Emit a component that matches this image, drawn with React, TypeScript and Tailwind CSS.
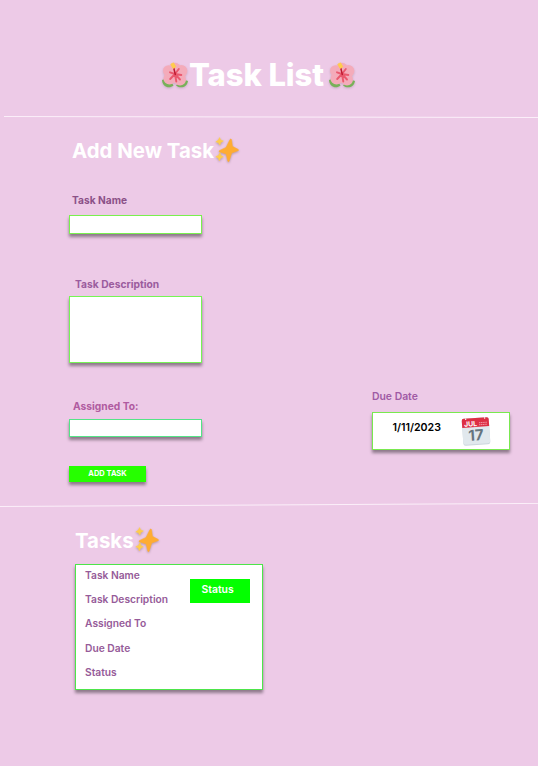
import React from "react";

function Hibiscus({ className = "" }: { className?: string }) {
  return (
    <svg viewBox="0 0 26 26" className={"h-[26px] w-[26px] shrink-0 drop-shadow-[0_1px_1px_rgba(0,0,0,0.15)] " + className}>
      <path d="M0 18c4-1.500 9 .8 11.500 5.500-4 3.500-11 2-11.500-5.500z" fill="#78b159" />
      <path d="M26 19c-4-1.500-9 .5-12 4.500 4 3.300 11 2.500 12-4.500z" fill="#78b159" />
      <g fill="#f4abba">
        <circle cx="13" cy="6.600" r="5.800" />
        <circle cx="6.600" cy="8.800" r="5.600" />
        <circle cx="19.400" cy="9" r="6" />
        <circle cx="7.500" cy="16.500" r="6" />
        <circle cx="18" cy="17.500" r="6" />
        <circle cx="13" cy="13" r="8" />
      </g>
      <path d="M13 12L8 10.300M13 12l-4.800 5M13 12l1.300 7.500M13 12l6.300 1M13 12l3.800-5M13 12l5 5.500" fill="none" stroke="#ea596e" strokeWidth="1.900" strokeLinecap="round" />
      <path d="M13.300 12.500L11.500 5" stroke="#be1931" strokeWidth="1.500" strokeLinecap="round" />
      <path d="M8.800 2.200l2.700-1.400 2.400 4-2.900 1.600z" fill="#ffcc4d" stroke="#ffcc4d" strokeWidth=".8" strokeLinejoin="round" />
    </svg>
  );
}

function Sparkles() {
  return (
    <svg viewBox="0 0 24 26" className="h-[26px] w-[24px] shrink-0 drop-shadow-[0_1px_1px_rgba(0,0,0,0.25)]">
      <path d="M15 2.500c.8-.9 1.500-.4 1.600.5l.8 6.300 5.600 3c.8.5.8 1.200-.1 1.500l-6.200 2.300-2.500 7.900c-.3.900-1.200.9-1.500 0l-1.500-7.100-6.500-2c-.9-.3-.9-1.100 0-1.500l6.400-3z" fill="#ffac33" stroke="#ffac33" strokeWidth=".5" />
      <path d="M4.600.6l1 2.400 2.700 1-2.500 1.500-1 2.600-1.400-2.400-2.600-.9 2.500-1.600z" fill="#ffcc4d" stroke="#ffcc4d" strokeWidth=".6" strokeLinejoin="round" />
      <path d="M5 15.800l.9 2.800 2.500 1.200-2.600 1.200-1.500 2.700-1-2.800-2.500-1.200 2.700-1.300z" fill="#ffcc4d" stroke="#ffcc4d" strokeWidth=".6" strokeLinejoin="round" />
    </svg>
  );
}

function CalendarIcon() {
  return (
    <svg viewBox="0 0 30 30" className="ml-[20px] mt-[3px] h-[30px] w-[30px] shrink-0">
      <g transform="rotate(-4 15 15)">
        <rect x="1.500" y="2" width="27" height="27" rx="2.500" fill="#ccd6dd" />
        <rect x="1.500" y="2" width="27" height="26" rx="2.500" fill="#e1e8ed" />
        <path d="M1.500 11V4a2 2 0 012-2h23a2 2 0 012 2v7z" fill="#dd2e44" />
        <text x="3.500" y="10" fontSize="7" fontWeight="700" fill="#fff" fontFamily="Inter, sans-serif">JUL</text>
        <path d="M18.500 7h8M18.500 9h8" stroke="#f4abba" strokeWidth=".8" strokeDasharray="1.300 .5" />
        <g fill="#fff"><circle cx="5.500" cy="2.600" r=".7" /><circle cx="24.500" cy="2.600" r=".7" /></g>
        <text x="14.800" y="24.500" textAnchor="middle" fontSize="15" fontWeight="700" fill="#66757f" fontFamily="Inter, sans-serif">17</text>
      </g>
    </svg>
  );
}

const shadow = "shadow-[0_3px_3px_rgba(0,0,0,0.4)]";

export default function App() {
  return (
    <main className="h-[766px] w-[538px] overflow-hidden bg-[#edcae7] font-['Inter',sans-serif]">
      <header className="flex h-[116px] items-start pl-[162px] pt-[59px]">
        <Hibiscus className="mt-[3px]" />
        <h1 className="ml-[1px] w-[140px] whitespace-nowrap text-[31px] font-extrabold leading-[32px] tracking-[-0.1px] text-white">Task List</h1>
        <Hibiscus className="mt-[3px]" />
      </header>
      <svg viewBox="0 0 538 2" className="block h-[2px] w-full">
        <path d="M4 .5L538 1.500" stroke="#fbeff9" />
      </svg>

      <section className="flex h-[385px] items-start pl-[69px]">
        <form className="w-[303px] pt-[19px]">
          <div className="flex h-[27px] items-start pl-[3px]">
            <h2 className="w-[143px] whitespace-nowrap text-[20.4px] font-bold leading-[27px] text-white">Add New Task</h2>
            <Sparkles />
          </div>
          <label className="mt-[28px] block h-[23px] pl-[3px] text-[10.2px] font-bold leading-[17px] text-[#8b5187]">Task Name</label>
          <div className={"h-[19px] w-[133px] border border-[#7af04e] bg-white " + shadow} />
          <label className="mt-[42px] block h-[20px] pl-[6px] text-[10.25px] font-bold leading-[17px] text-[#9b5c9e]">Task Description</label>
          <div className={"h-[67px] w-[133px] border border-[#76f455] bg-white " + shadow} />
          <label className="mt-[35px] block h-[21px] pl-[4px] text-[10.25px] font-bold leading-[17px] text-[#b05ba0]">Assigned To:</label>
          <div className={"h-[18px] w-[133px] border border-[#54e487] bg-white " + shadow} />
          <button type="button" className={"mt-[29px] block h-[16px] w-[77px] bg-[#26ff00] text-[7.5px] font-bold leading-[16px] text-white " + shadow}>ADD TASK</button>
        </form>
        <div className="pt-[270px]">
          <label className="block h-[24px] text-[10.4px] font-semibold leading-[17px] text-[#a05aa5]">Due Date</label>
          <div className={"flex h-[38px] w-[138px] items-start border border-[#79e94f] bg-white pl-[19.5px] " + shadow}>
            <span className="w-[48.5px] whitespace-nowrap pt-[6px] text-[10.6px] font-semibold leading-[18px] text-black">1/11/2023</span>
            <CalendarIcon />
          </div>
        </div>
      </section>

      <svg viewBox="0 0 538 4" className="block h-[4px] w-full">
        <path d="M0 3.500L538 .4" stroke="#fbeff9" />
      </svg>
      <section className="pl-[75px] pt-[20px]">
        <div className="flex h-[37px] items-start">
          <h2 className="w-[60px] whitespace-nowrap pt-[1px] text-[20.4px] font-bold leading-[26px] text-white">Tasks</h2>
          <Sparkles />
        </div>
        <article className={"flex h-[126px] w-[188px] items-start border border-[#4de54a] bg-white pl-[9px] " + shadow}>
          <ul className="w-[105px] whitespace-nowrap text-[10.25px] font-semibold leading-[24.200px] text-[#965b99]">
            <li className="-mt-[2px]">Task Name</li>
            <li>Task Description</li>
            <li>Assigned To</li>
            <li>Due Date</li>
            <li>Status</li>
          </ul>
          <span className="mt-[14px] h-[24px] w-[60px] bg-[#03ff00] pl-[11.5px] text-[10.4px] font-semibold leading-[21px] text-white">Status</span>
        </article>
      </section>
    </main>
  );
}
